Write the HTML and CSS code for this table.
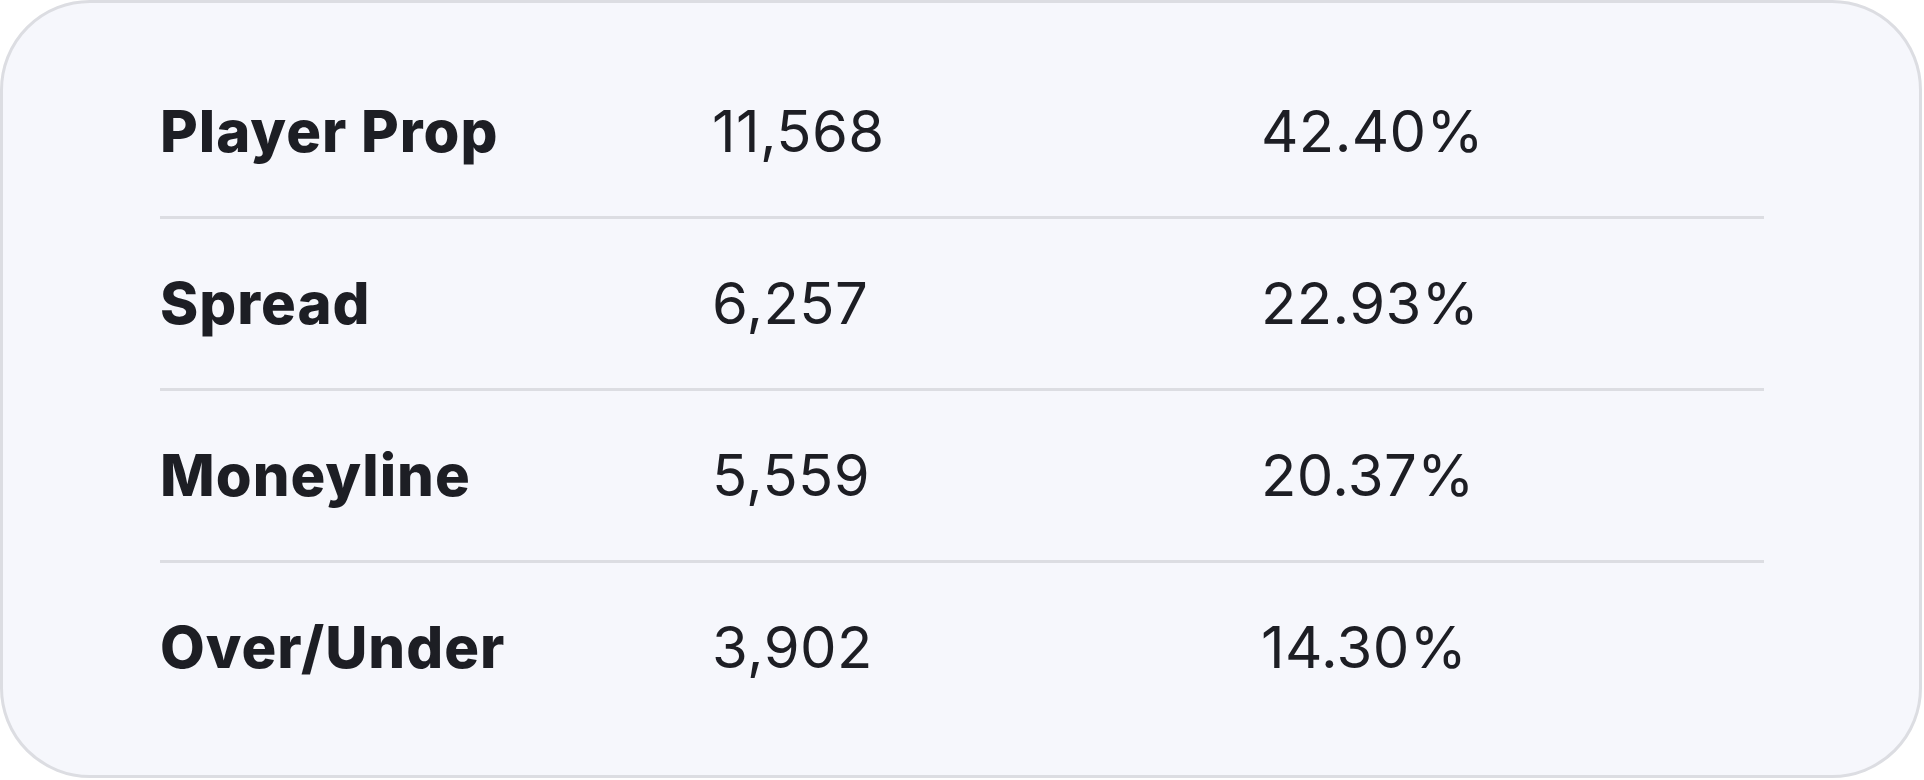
FILE: index.html
```html
<!DOCTYPE html>
<html lang="en">
<head>
    <meta charset="UTF-8">
    <title>Bet Types</title>
    <link rel="stylesheet" href="styles.css">
</head>
<body>
    <div class="card">
        <div class="row">
            <div class="cell-name">Player Prop</div>
            <div class="cell-num">11,568</div>
            <div class="cell-num">42.40%</div>
        </div>
        <div class="row">
            <div class="cell-name">Spread</div>
            <div class="cell-num">6,257</div>
            <div class="cell-num">22.93%</div>
        </div>
        <div class="row">
            <div class="cell-name">Moneyline</div>
            <div class="cell-num">5,559</div>
            <div class="cell-num">20.37%</div>
        </div>
        <div class="row">
            <div class="cell-name">Over/Under</div>
            <div class="cell-num">3,902</div>
            <div class="cell-num">14.30%</div>
        </div>
    </div>
</body>
</html>
```
FILE: styles.css
```css
body {
    margin: 0;
    font-family: "Inter", "Noto Sans", sans-serif;
    background-color: #ffffff;
    color: #1d1e24;
}
.card {
    box-sizing: border-box;
    width: 1922px;
    padding: 44px 155px 43px 157px;
    background: #f6f7fc;
    border: 3px solid #dcdde2;
    border-radius: 90px;
}
.row {
    display: grid;
    grid-template-columns: 552px 549px 1fr;
    align-items: center;
    height: 169px;
    border-bottom: 3px solid #dcdde2;
    font-size: 58px;
    line-height: 1.2;
}
.row:last-child {
    border-bottom: none;
}
.cell-name {
    font-weight: 800;
    letter-spacing: 1px;
}
.cell-num {
    font-weight: 400;
    letter-spacing: 0.4px;
}
```
